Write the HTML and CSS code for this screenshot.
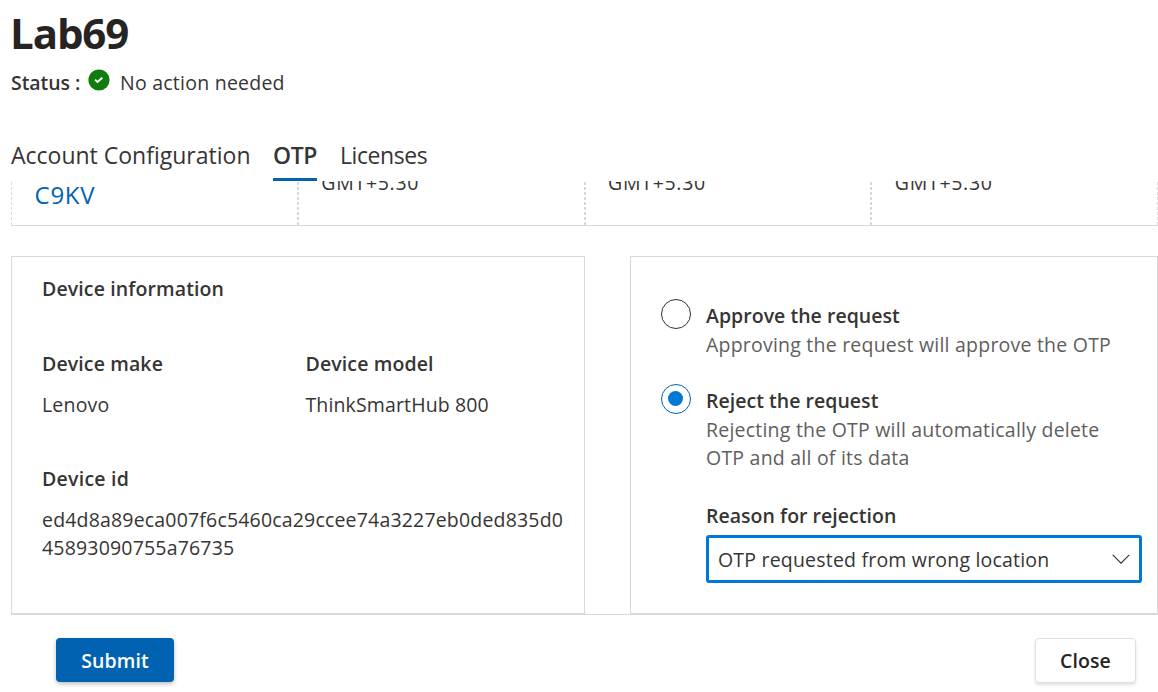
FILE: index.html
```html
<!DOCTYPE html>
<html lang="en">
<head>
<meta charset="utf-8">
<title>Lab69</title>
<link rel="stylesheet" href="styles.css">
</head>
<body>
<div class="panel">
  <header class="header">
    <h1 class="title">Lab69</h1>
    <div class="status">
      <span class="status-label">Status :</span>
      <svg class="status-icon" viewBox="0 0 22 22" aria-hidden="true"><circle cx="11" cy="11" r="10.6" fill="#107c10"/><path d="M7 10.8l2.5 2.2 4.8-4.3" fill="none" stroke="#fff" stroke-width="1.9"/></svg>
      <span class="status-text">No action needed</span>
    </div>
  </header>
  <nav class="tabs">
    <a class="tab">Account Configuration</a>
    <a class="tab tab-active">OTP</a>
    <a class="tab tab-last">Licenses</a>
  </nav>
  <main class="content">
    <div class="row">
      <div class="cell code"><span>C9KV</span></div>
      <div class="cell"><span>GMT+5.30</span></div>
      <div class="cell"><span>GMT+5.30</span></div>
      <div class="cell"><span>GMT+5.30</span></div>
    </div>
    <div class="cards">
      <section class="card device">
        <h2 class="label heading">Device information</h2>
        <div class="pair">
          <div class="field"><h3 class="label">Device make</h3><p class="value">Lenovo</p></div>
          <div class="field"><h3 class="label">Device model</h3><p class="value model">ThinkSmartHub 800</p></div>
        </div>
        <div class="field"><h3 class="label short">Device id</h3><p class="value">ed4d8a89eca007f6c5460ca29ccee74a3227eb0ded835d0<br>45893090755a76735</p></div>
      </section>
      <section class="card decision">
        <div class="option">
          <span class="radio"></span>
          <div><h3 class="label">Approve the request</h3><p class="hint">Approving the request will approve the OTP</p></div>
        </div>
        <div class="option">
          <span class="radio radio-on"></span>
          <div><h3 class="label">Reject the request</h3><p class="hint">Rejecting the OTP will automatically delete<br>OTP and all of its data</p></div>
        </div>
        <div class="reason">
          <h3 class="label">Reason for rejection</h3>
          <div class="select"><span>OTP requested from wrong location</span><svg class="chevron" viewBox="0 0 18 11" aria-hidden="true"><path d="M.7.8L9 9.2 17.3.8" fill="none" stroke="#323130" stroke-width="1.1"/></svg></div>
        </div>
      </section>
    </div>
  </main>
  <footer class="footer">
    <button class="button primary">Submit</button>
    <button class="button">Close</button>
  </footer>
</div>
</body>
</html>
```
FILE: styles.css
```css
* { box-sizing: border-box; margin: 0; padding: 0; }
body {
  width: 1158px;
  height: 692px;
  overflow: hidden;
  background: #fff;
  color: #363534;
  font: 400 19.5px/28px "Open Sans", "Noto Sans", sans-serif;
  letter-spacing: .2px;
}
.panel { height: 692px; padding-left: 11px; display: flex; flex-direction: column; }
.header { height: 138px; padding-top: 5px; flex: none; }
.title { font-size: 42px; line-height: 56px; font-weight: 700; color: #252423; letter-spacing: -1.1px; margin-left: -1px; }
.status { display: flex; align-items: center; margin-top: 8px; white-space: nowrap; }
.status-label { font-weight: 600; width: 76.5px; letter-spacing: -.05px; }
.status-icon { width: 22px; height: 22px; margin: -6px 10.5px 0 0; }
.status-text { letter-spacing: .24px; }
.tabs { height: 43px; display: flex; flex: none; font-size: 23px; line-height: 35px; letter-spacing: 0; white-space: nowrap; }
.tab { height: 43px; }
.tab-active { width: 44px; margin: 0 23px 0 22.5px; font-weight: 600; letter-spacing: -.4px; border-bottom: 3px solid #0062b1; }
.tab-last { letter-spacing: -.42px; }
.content { height: 433px; overflow: hidden; flex: none; }
.row { display: grid; grid-template-columns: repeat(4, 1fr); height: 45px; border-bottom: 1px solid #d9d9d9; }
.cell { padding-left: 22.6px; margin-top: 1px; border: 1px dashed #d9d9d9; border-width: 0 1px; letter-spacing: .7px; }
.cell > span { display: block; margin-top: -13px; }
.code { font-size: 24px; color: #0062b1; }
.code > span { margin-top: -1px; }
.cards { display: flex; justify-content: space-between; margin-top: 30px; height: 358px; }
.card { border: 1px solid #d9d9d9; }
.device { width: 574px; padding: 18px 20px 0 30px; }
.decision { width: 528px; padding: 42px 15px 0 30px; }
.label { font-size: inherit; font-weight: 600; letter-spacing: .12px; }
.decision .label { letter-spacing: .03px; }
.short { letter-spacing: .25px; }
.heading { margin-bottom: 47px; }
.pair { display: grid; grid-template-columns: 263.5px 1fr; margin-bottom: 46px; }
.value { margin-top: 13px; white-space: nowrap; letter-spacing: .18px; }
.model { letter-spacing: .13px; }
.option { display: grid; grid-template-columns: 45px 1fr; margin-bottom: 25px; white-space: nowrap; }
.option .label { margin-top: 3px; }
.option + .option { margin-bottom: 30px; }
.hint { color: #605e5c; margin-top: 1px; letter-spacing: .22px; }
.radio { width: 30px; height: 30px; border: 1px solid #323130; border-radius: 50%; display: flex; align-items: center; justify-content: center; }
.radio-on { border-color: #0062b1; }
.radio-on::before { content: ""; width: 15px; height: 15px; margin: 0 1px 1px 0; border-radius: 50%; background: #0078d4; }
.reason { padding-left: 45px; }
.select { height: 48px; margin-top: 5px; border: 3px solid #0078d4; border-radius: 3px; padding: 1px 9px 0; display: flex; align-items: center; justify-content: space-between; white-space: nowrap; }
.chevron { width: 18px; height: 11px; }
.footer { border-top: 1px solid #d9d9d9; flex: 1; display: flex; justify-content: space-between; padding: 23px 22px 0 45px; }
.button { height: 45px; width: 101px; border: 1px solid #e1dfdd; border-radius: 4px; background: #fff; color: #252423; font: inherit; font-weight: 600; letter-spacing: .1px; box-shadow: 0 2px 3px rgba(0,0,0,.12); }
.primary { width: 118px; height: 44px; border: 0; padding-top: 1px; background: #0062b1; color: #fff; box-shadow: 0 2px 4px rgba(0,0,0,.25); }
```
